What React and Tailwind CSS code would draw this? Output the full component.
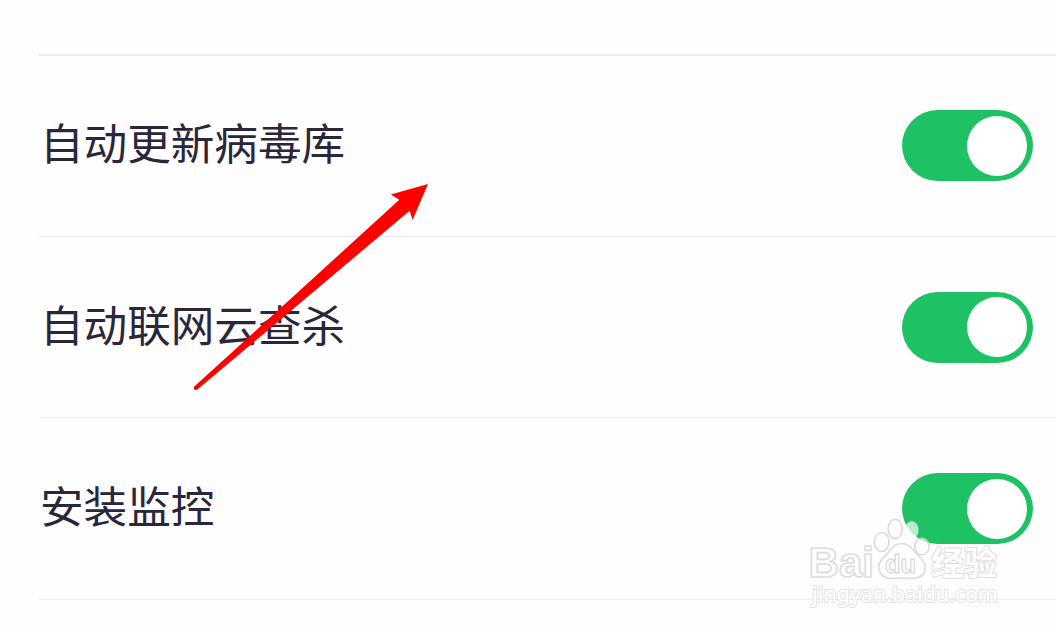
import React, { useState } from 'react';

const initialSettings = [
  { id: 'update', label: '自动更新病毒库', enabled: true },
  { id: 'cloud', label: '自动联网云查杀', enabled: true },
  { id: 'install', label: '安装监控', enabled: true },
];

const Toggle = ({ label, checked, onChange }) => (
  <button
    type="button"
    role="switch"
    aria-checked={checked}
    aria-label={label}
    onClick={onChange}
    className={`flex h-[71px] w-[131px] shrink-0 items-center rounded-full px-1.5 ${
      checked ? 'justify-end bg-[#1ec164]' : 'justify-start bg-gray-300'
    }`}
  >
    <span className="size-[60px] rounded-full bg-white" />
  </button>
);

const Arrow = () => (
  <svg className="pointer-events-none absolute inset-0" width="1056" height="632" viewBox="0 0 1056 632">
    <path
      d="M194.3 386.6 L399.3 199.8 L390.8 194.6 L428 184 L412.6 220 L409.6 210.8 L197.4 389.6 Q195 390.6 194 389 Q193.4 387.6 194.3 386.6 Z"
      fill="#ff0000"
    />
  </svg>
);

const Watermark = () => (
  <svg
    className="pointer-events-none absolute inset-0 opacity-70"
    width="1056"
    height="632"
    viewBox="0 0 1056 632"
    fill="#ffffff"
    stroke="#d0d0d0"
    strokeWidth="1.7"
    strokeLinejoin="round"
  >
    <ellipse cx="881.7" cy="542" rx="7.3" ry="9.5" />
    <ellipse cx="895.2" cy="529" rx="7" ry="9.7" />
    <ellipse cx="911.7" cy="530" rx="6.6" ry="8.6" stroke="#ffffff" strokeOpacity="0.35" />
    <ellipse cx="922" cy="546.5" rx="7.3" ry="8.5" />
    <path d="M901.5 543.5 C893 543.5 891 551 885.5 555.5 C879 561 877 567 880 572.5 C884 580 893 578.5 901.5 578 C910 578.5 920 580 924 573 C927 567 925 562 919 556 C912 550 910 543.5 901.5 543.5 Z" />
    <text
      x="808.5"
      y="577"
      fontSize="42.5"
      fontWeight="700"
      textLength="65.5"
      lengthAdjust="spacingAndGlyphs"
      className="font-['Liberation_Sans',sans-serif]"
    >
      Bai
    </text>
    <text
      x="885"
      y="573"
      fontSize="25"
      fontWeight="700"
      strokeWidth="1.4"
      textLength="31"
      lengthAdjust="spacingAndGlyphs"
      className="font-['Liberation_Sans',sans-serif]"
    >
      du
    </text>
    <text
      x="931"
      y="574.5"
      fontSize="33"
      fontWeight="700"
      strokeWidth="2"
      paintOrder="stroke"
      className="font-['Noto_Sans_CJK_SC',sans-serif]"
    >
      经验
    </text>
    <text
      x="812"
      y="602"
      fontSize="21"
      fontWeight="500"
      stroke="#d8d8d8"
      strokeWidth="2"
      textLength="186"
      paintOrder="stroke"
      className="font-['Noto_Sans',sans-serif]"
    >
      jingyan.baidu.com
    </text>
  </svg>
);

export default function App() {
  const [settings, setSettings] = useState(initialSettings);

  const toggle = (id) => {
    setSettings(settings.map((s) => (s.id === id ? { ...s, enabled: !s.enabled } : s)));
  };

  return (
    <div className="relative h-[632px] w-[1056px] overflow-hidden bg-[#fefefe] pt-[54px] pl-[39px] font-['Noto_Sans_CJK_SC',sans-serif]">
      <div className="grid grid-rows-[181px_181px_182px] border-t-2 border-[#ececec]">
        {settings.map((s) => (
          <div
            key={s.id}
            className="flex items-center justify-between border-b border-[#ececec] pr-[23px] pl-px first:pb-px"
          >
            <span className="pb-[7px] text-[43.6px] leading-none whitespace-nowrap text-[#2b263b]">{s.label}</span>
            <Toggle label={s.label} checked={s.enabled} onChange={() => toggle(s.id)} />
          </div>
        ))}
      </div>
      <Arrow />
      <Watermark />
    </div>
  );
}
